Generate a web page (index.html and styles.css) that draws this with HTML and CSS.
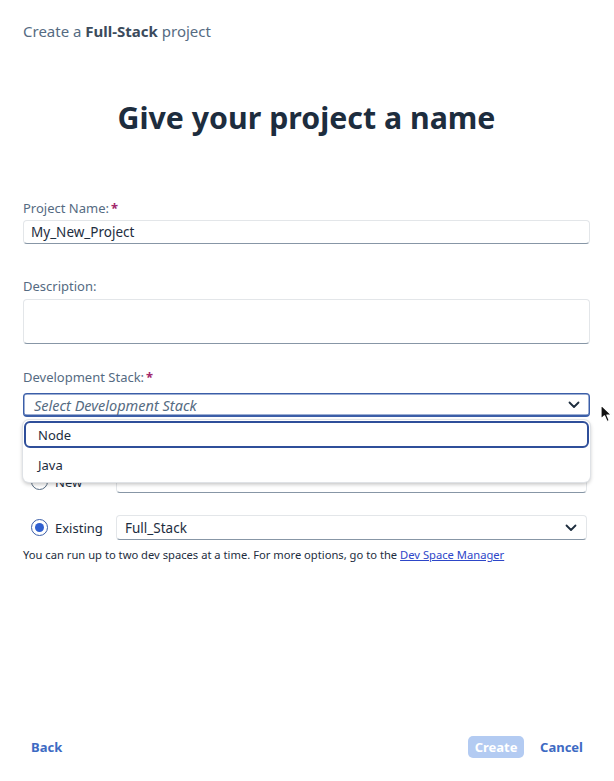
FILE: index.html
```html
<!DOCTYPE html>
<html lang="en">
<head>
<meta charset="utf-8">
<title>Create a Full-Stack project</title>
<link rel="stylesheet" href="styles.css">
</head>
<body>
<div class="app">
  <div class="crumb">Create a <b>Full-Stack</b> project</div>
  <h1 class="title">Give your project a name</h1>

  <div class="field f-name">
    <label class="label">Project Name:<span class="req">*</span></label>
    <div class="input">My_New_Project</div>
  </div>

  <div class="field f-desc">
    <label class="label">Description:</label>
    <div class="textarea"></div>
  </div>

  <div class="field f-stack">
    <label class="label">Development Stack:<span class="req">*</span></label>
    <div class="select-wrap">
      <div class="select focused">
        <span class="placeholder">Select Development Stack</span>
        <svg class="chev" width="12" height="8" viewBox="0 0 12 8"><path d="M1.5 1.5 L6 6 L10.5 1.5" fill="none" stroke="#1d2d3e" stroke-width="1.8" stroke-linecap="round" stroke-linejoin="round"/></svg>
      </div>
      <div class="popup">
        <div class="option active">Node</div>
        <div class="option">Java</div>
      </div>
    </div>
  </div>

  <div class="radio-row r-new">
    <span class="radio"></span>
    <span class="radio-label">New</span>
    <div class="input small"></div>
  </div>

  <div class="radio-row r-existing">
    <span class="radio checked"></span>
    <span class="radio-label">Existing</span>
    <div class="select small-sel">
      <span>Full_Stack</span>
      <svg class="chev" width="12" height="8" viewBox="0 0 12 8"><path d="M1.5 1.5 L6 6 L10.5 1.5" fill="none" stroke="#1d2d3e" stroke-width="1.8" stroke-linecap="round" stroke-linejoin="round"/></svg>
    </div>
  </div>

  <p class="info">You can run up to two dev spaces at a time. For more options, go to the <a href="#">Dev Space Manager</a></p>

  <div class="footer">
    <a class="link-btn" href="#">Back</a>
    <div class="right">
      <button class="primary" disabled>Create</button>
      <a class="link-btn" href="#">Cancel</a>
    </div>
  </div>

  <svg class="cursor" width="14" height="20" viewBox="0 0 14 20"><path d="M1 1 L1 15 L4.5 11.8 L7 17.5 L9.3 16.5 L6.9 11 L11.5 11 Z" fill="#111" stroke="#fff" stroke-width="1.2" stroke-linejoin="round"/></svg>
</div>
</body>
</html>
```

FILE: styles.css
```css
* { box-sizing: border-box; }
html, body { margin: 0; padding: 0; background: #fff; }
body {
  font-family: "Noto Sans", "Open Sans", "Liberation Sans", sans-serif;
  color: #1d2d3e;
}
.app {
  position: relative;
  width: 614px;
  height: 781px;
  padding: 21px 24px 0 23px;
  display: flex;
  flex-direction: column;
}
.crumb {
  font-size: 15px;
  line-height: 20px;
  color: #556b82;
}
.crumb b { color: #3b4b5c; font-weight: 700; }
.title {
  margin: 59px 0 0;
  text-align: center;
  font-size: 30.3px;
  line-height: 36px;
  font-weight: 700;
  color: #1d2d3e;
}
.field { display: flex; flex-direction: column; }
.label {
  font-size: 13px;
  line-height: 18px;
  color: #556b82;
}
.req { color: #a2276b; margin-left: 2px; font-weight: 700; }
.f-name { margin-top: 63px; }
.f-name .label { margin-bottom: 3px; }
.f-desc { margin-top: 33px; }
.f-desc .label { margin-bottom: 4px; }
.f-stack { margin-top: 24px; }
.f-stack .label { margin-bottom: 7px; }
.input, .textarea, .select {
  background: #fff;
  border: 1px solid #e3e6e9;
  border-bottom: 1px solid #8796a6;
  border-radius: 4px;
  font-size: 13.5px;
  color: #1d2d3e;
}
.input {
  height: 24px;
  padding: 0 7px;
  display: flex;
  align-items: center;
}
.textarea { height: 45px; }
.select-wrap { position: relative; }
.select {
  height: 24px;
  padding: 0 9px 0 10px;
  display: flex;
  align-items: center;
  justify-content: space-between;
}
.select.focused {
  border: 1px solid #3b5ea8;
  border-bottom-width: 2px;
  box-shadow: inset 0 0 0 0.5px #3b5ea8;
}
.placeholder { font-style: italic; color: #556b82; font-size: 14.5px; }
.chev { flex: none; }
.popup {
  position: absolute;
  left: 0;
  right: 0;
  top: 27px;
  height: 62px;
  background: #fff;
  border-radius: 6px;
  box-shadow: 0 0 0 1px #dfe2e6, 0 2px 4px rgba(0,0,0,0.28);
  padding: 1px;
  z-index: 2;
}
.option {
  height: 28px;
  padding: 0 14px;
  display: flex;
  align-items: center;
  font-size: 13px;
  color: #1d2d3e;
}
.option.active {
  border: 2px solid #2f4f9a;
  border-radius: 6px;
  padding: 0 12px;
  height: 27px;
}
.option + .option { height: 33px; }
.radio-row {
  display: flex;
  align-items: center;
  padding-left: 8px;
}
.r-new { margin-top: 53px; }
.r-existing { margin-top: 22px; }
.radio {
  width: 17px;
  height: 17px;
  border-radius: 50%;
  border: 1px solid #556b82;
  background: #fff;
  flex: none;
  display: flex;
  align-items: center;
  justify-content: center;
}
.radio.checked { border-color: #3b5ea8; }
.radio.checked::after {
  content: "";
  width: 9px;
  height: 9px;
  border-radius: 50%;
  background: #2f5fd0;
}
.radio-label {
  margin-left: 7px;
  width: 61px;
  font-size: 13px;
  color: #1d2d3e;
}
.input.small { flex: 1; height: 23px; margin-right: 3px; }
.select.small-sel { flex: 1; height: 25px; margin-right: 3px; padding: 0 9px 0 8px; }
.info {
  margin: 8px 0 0;
  font-size: 11.2px;
  line-height: 14px;
  color: #1d2d3e;
}
.info a { color: #2d46c8; text-decoration: underline; }
.footer {
  margin-top: auto;
  margin-bottom: 23px;
  display: flex;
  align-items: center;
  justify-content: space-between;
  padding-left: 8px;
}
.right { display: flex; align-items: center; gap: 16px; padding-right: 7px; }
.link-btn {
  font-size: 13px;
  font-weight: 700;
  color: #3d6ac3;
  text-decoration: none;
}
.primary {
  height: 22px;
  width: 56px;
  border: none;
  border-radius: 5px;
  background: #b3cbf2;
  color: #fff;
  font-family: inherit;
  font-size: 13px;
  font-weight: 700;
  padding: 0;
}
.cursor {
  position: absolute;
  left: 600px;
  top: 404px;
}
```
